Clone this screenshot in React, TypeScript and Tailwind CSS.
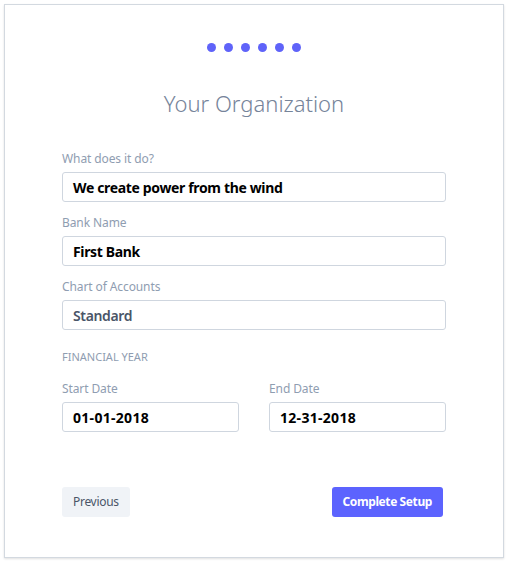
const fields = [
  { label: "What does it do?", value: "We create power from the wind", muted: false },
  { label: "Bank Name", value: "First Bank", muted: false },
  { label: "Chart of Accounts", value: "Standard", muted: true },
];

function Field({ label, value, muted, wide }: { label: string; value: string; muted?: boolean; wide?: boolean }) {
  return (
    <div>
      <div className="text-[12px] leading-[16px] text-[#8f9db1] tracking-[-0.1px]">{label}</div>
      <div
        className={`mt-[5px] h-[30px] flex items-center px-[10px] rounded-[3px] border border-[#cfd6df] text-[14px] ${
          wide ? "tracking-[0.3px]" : "tracking-[-0.35px]"
        } ${muted ? "font-semibold text-[#4a5568]" : "font-bold text-black"}`}
      >
        {value}
      </div>
    </div>
  );
}

export default function App() {
  return (
    <div className="bg-white min-h-[562px] pt-[4px] pl-[4px]" style={{ fontFamily: '"Noto Sans", "Open Sans", sans-serif' }}>
      <div className="w-[500px] h-[554px] border border-[#d3d9e0] shadow-[0_1px_2px_rgba(0,0,0,0.12)] px-[57px] pt-[38px]">
        {/* step dots */}
        <div className="flex justify-center gap-[8px]">
          {[0, 1, 2, 3, 4, 5].map((i) => (
            <span key={i} className="w-[9px] h-[9px] rounded-full bg-[#5f63f9]" />
          ))}
        </div>

        <h1 className="mt-[36px] text-center text-[22px] leading-[30px] font-light text-[#76849a]">
          Your Organization
        </h1>

        <div className="mt-[33px] flex flex-col gap-[13px]">
          {fields.map((f) => (
            <Field key={f.label} {...f} />
          ))}
        </div>

        <div className="mt-[20px] text-[11px] leading-[14px] uppercase text-[#8f9db1]">Financial Year</div>

        <div className="mt-[17px] grid grid-cols-2 gap-[30px]">
          <Field label="Start Date" value="01-01-2018" wide />
          <Field label="End Date" value="12-31-2018" wide />
        </div>

        <div className="mt-[55px] flex justify-between items-center">
          <button className="h-[30px] px-[11px] rounded-[3px] bg-[#f0f3f7] text-[12px] tracking-[-0.3px] text-[#4a5568]">
            Previous
          </button>
          <button className="h-[30px] px-[11px] mr-[3px] rounded-[3px] bg-[#5c63fe] text-[12px] tracking-[-0.4px] font-bold text-white">
            Complete Setup
          </button>
        </div>
      </div>
    </div>
  );
}
